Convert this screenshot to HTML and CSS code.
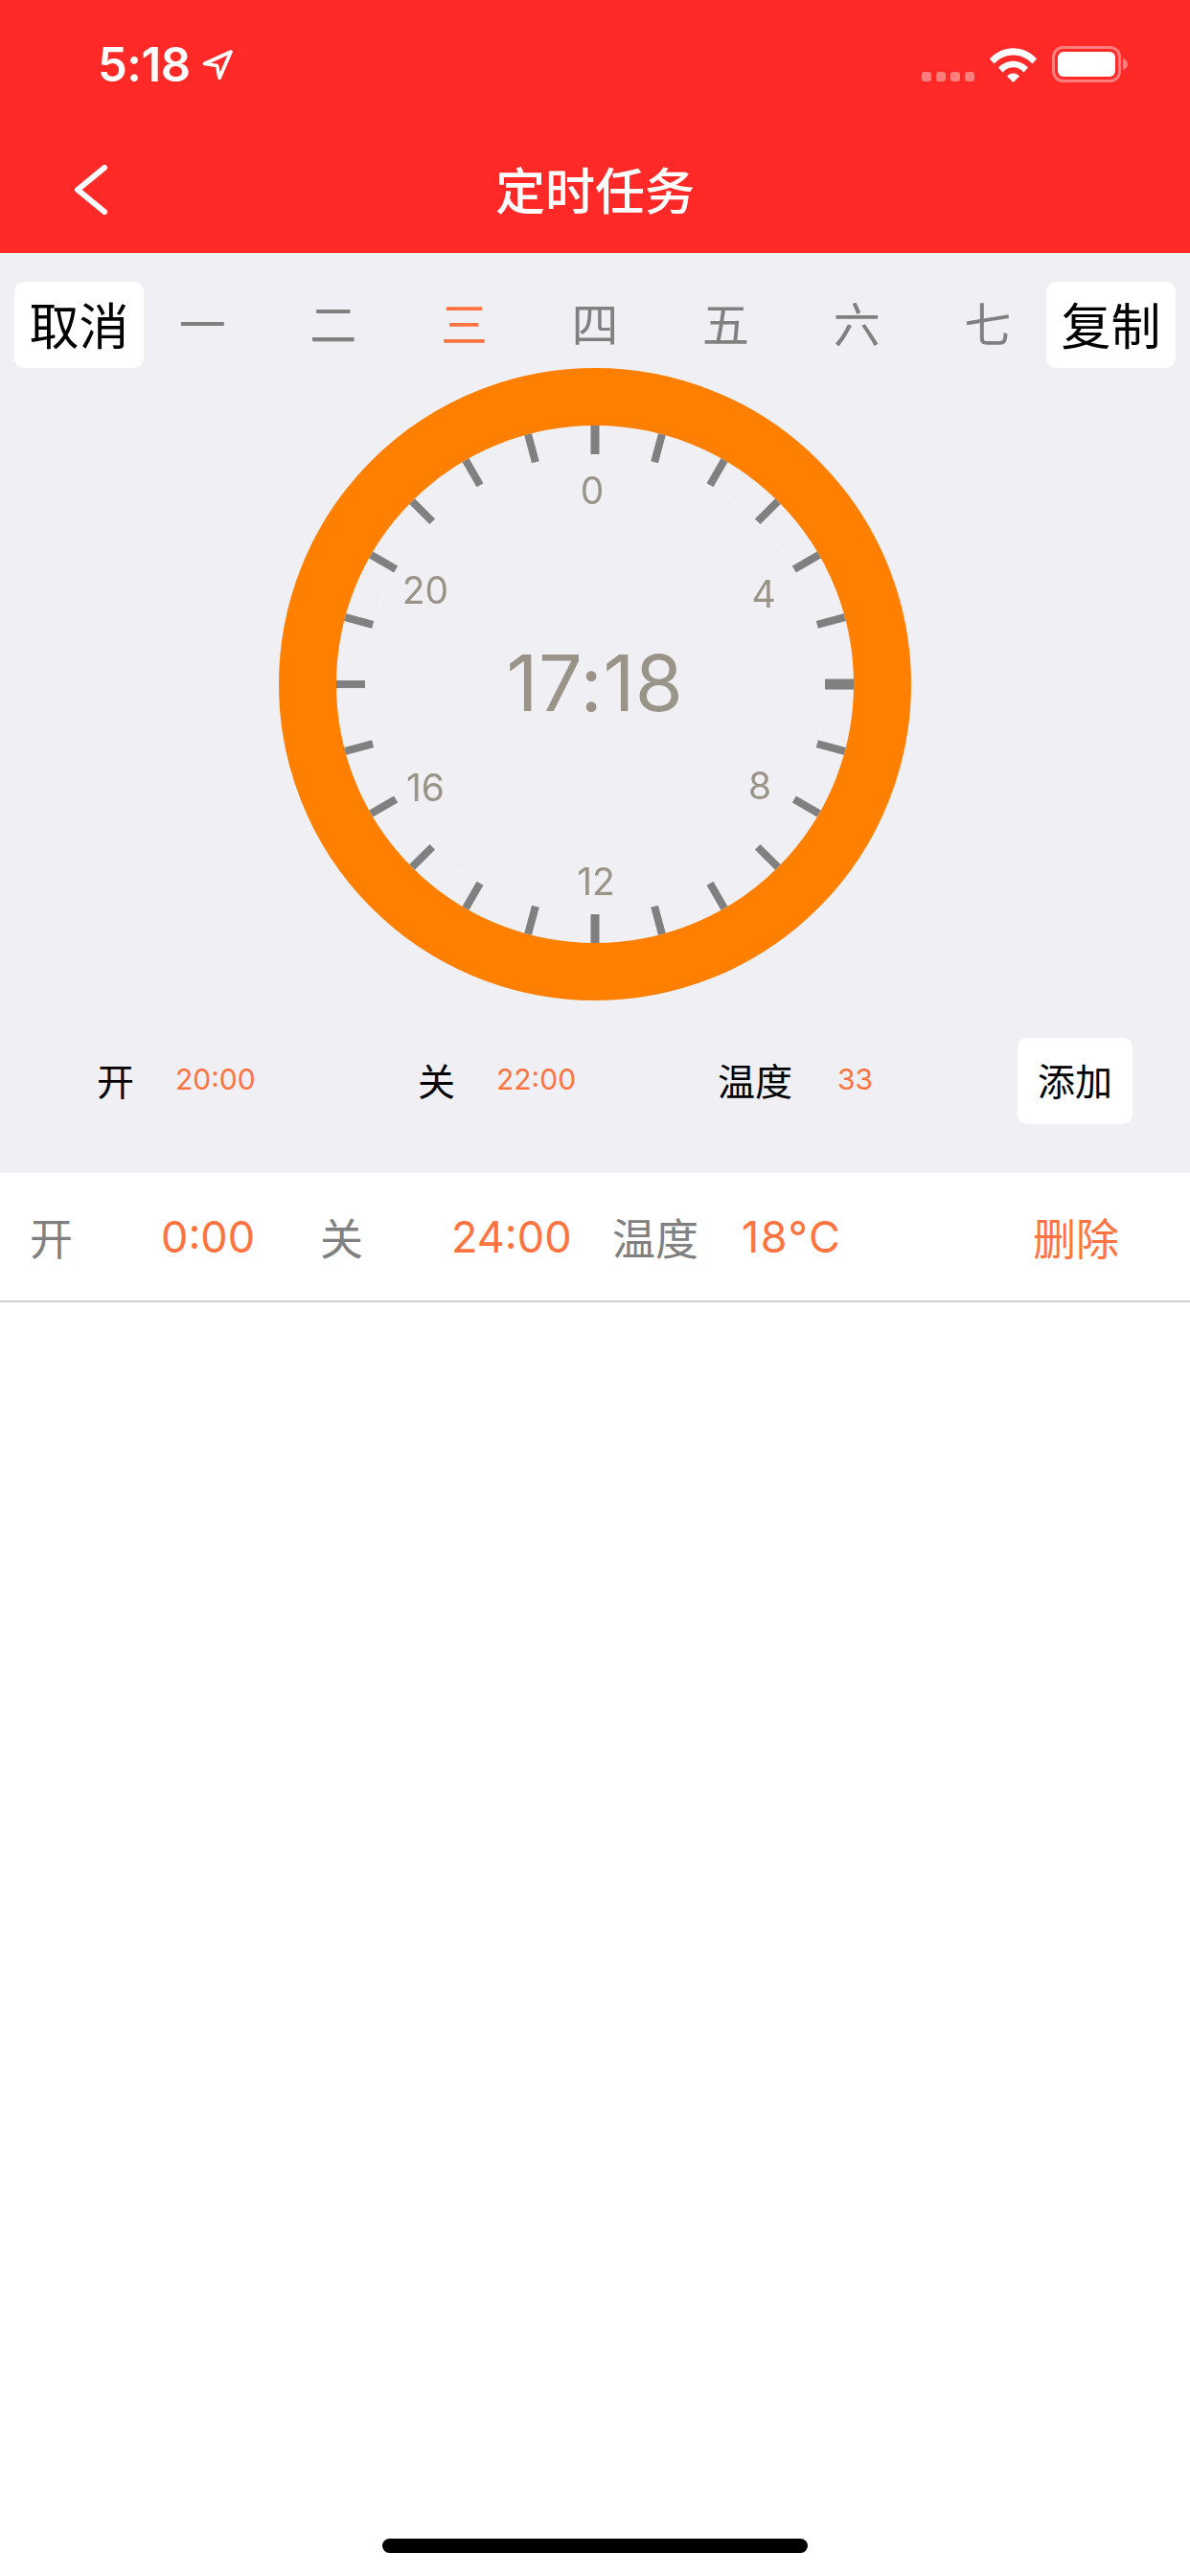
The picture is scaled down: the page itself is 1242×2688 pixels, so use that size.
FILE: index.html
```html
<!DOCTYPE html>
<html lang="zh">
<head>
<meta charset="utf-8">
<title>定时任务</title>
<link rel="stylesheet" href="styles.css">
</head>
<body>
<div class="page">
  <header class="header">
    <div class="status">
      <span class="time">5:18</span>
      <svg class="loc" width="32" height="32" viewBox="0 0 32 32"><path d="M2.5 14.5 L30 2 L18 29.5 L15.5 16.5 Z" fill="none" stroke="#fff" stroke-width="3.6" stroke-linejoin="round"/></svg>
      <span class="status-right">
        <span class="signal"><i></i><i></i><i></i><i></i></span>
        <svg class="wifi" width="49" height="36" viewBox="0 0 49 36"><path d="M0 11.5 C13.5 -3.5 35.5 -3.5 49 11.5 L44.5 16.5 C33 4.5 16 4.5 4.5 16.5 Z" fill="#fff"/><path d="M9 20.5 C17.5 11.5 31.5 11.5 40 20.5 L35.5 25.5 C29.5 18.5 19.5 18.5 13.5 25.5 Z" fill="#fff"/><path d="M18 29.5 C21.5 25.5 27.5 25.5 31 29.5 L24.5 36 Z" fill="#fff"/></svg>
        <svg class="battery" width="79" height="38" viewBox="0 0 79 38"><rect x="1.5" y="1.5" width="69" height="35" rx="10" fill="none" stroke="#ff7f7f" stroke-width="3"/><rect x="6" y="6" width="60" height="26" rx="6" fill="#fff"/><path d="M74 13 C77 14 79 16.5 79 19 C79 21.500 77 24 74 25 Z" fill="#ff7f7f"/></svg>
      </span>
    </div>
    <div class="nav">
      <svg class="back" width="40" height="56" viewBox="0 0 40 56"><path d="M35 5 L7 28 L35 51" fill="none" stroke="#fff" stroke-width="6" stroke-linecap="round" stroke-linejoin="round"/></svg>
      <h1 class="title">定时任务</h1>
    </div>
  </header>

  <section class="panel">
    <div class="days-row">
      <button class="btn btn-large">取消</button>
      <div class="days">
        <span class="day">一</span><span class="day">二</span><span class="day day-on">三</span><span class="day">四</span><span class="day">五</span><span class="day">六</span><span class="day">七</span>
      </div>
      <button class="btn btn-large">复制</button>
    </div>

    <svg class="clock" width="660" height="660" viewBox="-330 -330 660 660">
      <circle class="face-line" r="240" fill="none" stroke-width="2"/>
      <circle class="ring" r="300" fill="none" stroke-width="60"/>
      <g class="ticks">
        <rect x="-4.500" y="-270" width="9" height="30"/>
        <rect x="-4" y="-270" width="8" height="30" transform="rotate(15)"/>
        <rect x="-4" y="-270" width="8" height="30" transform="rotate(30)"/>
        <rect x="-4" y="-270" width="8" height="30" transform="rotate(45)"/>
        <rect x="-4" y="-270" width="8" height="30" transform="rotate(60)"/>
        <rect x="-4" y="-270" width="8" height="30" transform="rotate(75)"/>
        <rect x="-5.500" y="-270" width="11" height="30" transform="rotate(90)"/>
        <rect x="-4" y="-270" width="8" height="30" transform="rotate(105)"/>
        <rect x="-4" y="-270" width="8" height="30" transform="rotate(120)"/>
        <rect x="-4" y="-270" width="8" height="30" transform="rotate(135)"/>
        <rect x="-4" y="-270" width="8" height="30" transform="rotate(150)"/>
        <rect x="-4" y="-270" width="8" height="30" transform="rotate(165)"/>
        <rect x="-4.500" y="-270" width="9" height="30" transform="rotate(180)"/>
        <rect x="-4" y="-270" width="8" height="30" transform="rotate(195)"/>
        <rect x="-4" y="-270" width="8" height="30" transform="rotate(210)"/>
        <rect x="-4" y="-270" width="8" height="30" transform="rotate(225)"/>
        <rect x="-4" y="-270" width="8" height="30" transform="rotate(240)"/>
        <rect x="-4" y="-270" width="8" height="30" transform="rotate(255)"/>
        <rect x="-4" y="-270" width="8" height="30" transform="rotate(270)"/>
        <rect x="-4" y="-270" width="8" height="30" transform="rotate(285)"/>
        <rect x="-4" y="-270" width="8" height="30" transform="rotate(300)"/>
        <rect x="-4" y="-270" width="8" height="30" transform="rotate(315)"/>
        <rect x="-4" y="-270" width="8" height="30" transform="rotate(330)"/>
        <rect x="-4" y="-270" width="8" height="30" transform="rotate(345)"/>
      </g>
      <text class="hour" x="-3" y="-188">0</text>
      <text class="hour" x="176" y="-80">4</text>
      <text class="hour" x="172" y="120">8</text>
      <text class="hour" x="1" y="220">12</text>
      <text class="hour" x="-177" y="122">16</text>
      <text class="hour" x="-177" y="-84">20</text>
      <text class="now" x="0" y="28">17:18</text>
    </svg>

    <div class="add-row">
      <span class="add-cell add-cell-1"><span class="add-label">开</span><span class="add-value">20:00</span></span>
      <span class="add-cell add-cell-2"><span class="add-label">关</span><span class="add-value">22:00</span></span>
      <span class="add-cell add-cell-3"><span class="add-label add-label-wide">温度</span><span class="add-value">33</span></span>
      <button class="btn btn-small">添加</button>
    </div>
  </section>

  <section class="list">
    <div class="item">
      <span class="item-label item-a">开</span>
      <span class="item-value item-b">0:00</span>
      <span class="item-label item-c">关</span>
      <span class="item-value item-d">24:00</span>
      <span class="item-label item-e">温度</span>
      <span class="item-value item-f">18°C</span>
      <span class="item-value item-del">删除</span>
    </div>
  </section>

  <div class="home-bar"></div>
</div>
</body>
</html>
```
FILE: styles.css
```css
* { box-sizing: border-box; }
html, body { margin: 0; padding: 0; background: #fff; }
body { font-family: Inter, "Noto Sans CJK SC", sans-serif; }
.page { width: 1242px; height: 2688px; display: flex; flex-direction: column; overflow: hidden; background: #fff; }

.header { height: 264px; background: #ff2a28; color: #fff; flex: none; }
.status { height: 132px; display: flex; align-items: flex-start; padding: 37px 65px 0 102px; }
.time { font-size: 49px; line-height: 62px; font-weight: 600; letter-spacing: -0.5px; }
.loc { margin: 15px 0 0 12px; }
.status-right { margin-left: auto; display: flex; align-items: flex-start; }
.signal { display: flex; gap: 5px; margin: 38px 16px 0 0; }
.signal i { display: block; width: 10px; height: 10px; border-radius: 3px; background: #ff7f7f; }
.wifi { margin: 13px 16px 0 0; }
.battery { margin-top: 11px; }

.nav { height: 132px; position: relative; display: flex; align-items: center; justify-content: center; }
.back { position: absolute; left: 74px; top: 38px; }
.title { margin: 0 0 2px; font-size: 52px; font-weight: 500; line-height: 66px; font-family: "Noto Sans CJK SC", sans-serif; }

.panel { height: 960px; background: #efeff4; flex: none; padding-top: 30px; display: flex; flex-direction: column; }
.days-row { display: flex; align-items: center; height: 90px; padding: 0 15px; flex: none; }
.btn { border: 0; background: #fff; color: #000; border-radius: 10px; padding: 0 0 4px; font-family: "Noto Sans CJK SC", sans-serif; font-weight: 400; flex: none; }
.btn-large { width: 135px; height: 90px; font-size: 52px; position: relative; z-index: 1; }
.btn-small { width: 120px; height: 90px; font-size: 39px; }
.days { flex: 1; display: flex; margin: 0 -7px; }
.day { flex: 1; text-align: center; font-size: 49px; line-height: 84px; height: 90px; color: #808080; font-family: "Noto Sans CJK SC", sans-serif; font-weight: 400; }
.day-on { color: #ff7340; }

.clock { display: block; flex: none; margin: 0 auto; }
.ring { stroke: #ff8000; }
.face-line { stroke: #f1f1f6; }
.ticks { filter: blur(0.7px); }
.ticks rect { fill: #808080; }
.hour, .now { fill: #9a9388; text-anchor: middle; font-family: Inter, sans-serif; font-weight: 400; }
.hour { font-size: 39px; }
.now { font-size: 81px; letter-spacing: 0.5px; }

.add-row { display: flex; align-items: center; height: 90px; margin-top: 39px; flex: none; }
.add-cell { display: flex; align-items: center; flex: none; padding-bottom: 4px; }
.add-cell-1 { width: 436px; padding-left: 101px; }
.add-cell-2 { width: 313px; }
.add-cell-3 { width: 313px; }
.add-label { width: 82px; font-size: 39px; color: #000; font-family: "Noto Sans CJK SC", sans-serif; font-weight: 400; }
.add-label-wide { width: 125px; }
.add-value { font-size: 30px; color: #ff7340; font-weight: 400; }

.list { flex: none; }
.item { height: 135px; border-bottom: 2px solid #cfcfd2; display: flex; align-items: center; font-size: 45px; }
.item-label { color: #808080; font-family: "Noto Sans CJK SC", sans-serif; font-weight: 400; }
.item-value { color: #ff7340; font-weight: 400; }
.item-del { font-family: "Noto Sans CJK SC", sans-serif; }
.item-a { margin-left: 31px; width: 137px; }
.item-b { width: 166px; }
.item-c { width: 137px; }
.item-d { width: 168px; }
.item-e { width: 135px; }
.item-f { width: 304px; letter-spacing: 1.5px; }

.home-bar { width: 444px; height: 15px; border-radius: 8px; background: #000; margin: auto auto 24px; flex: none; }
```
